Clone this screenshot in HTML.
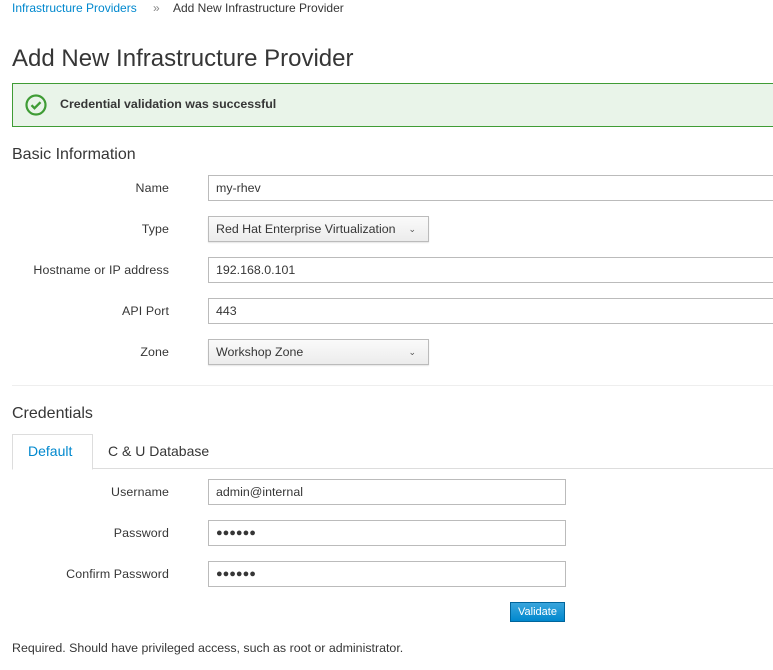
<!DOCTYPE html>
<html><head><style>
body{margin:0;width:773px;height:670px;overflow:hidden;background:#fff;font-family:"Liberation Sans",sans-serif;color:#363636;position:relative;font-size:12px}
.a{position:absolute;white-space:nowrap}
.lbl{position:absolute;right:604px;font-size:12.4px;color:#363636;line-height:26px;letter-spacing:0.1px}
.in{position:absolute;left:208px;height:24px;border:1px solid #bbb;background:#fff;box-sizing:content-box;font-size:12.4px;line-height:24px;padding-left:7px}
.sel{position:absolute;left:208px;height:26px;border:1px solid #bbb;background:linear-gradient(#fafafa,#ececec);font-size:12.4px;line-height:24px;padding-left:7px;box-sizing:border-box;box-shadow:0 1px 1px rgba(0,0,0,.1)}
.sel span{position:absolute;right:12px;top:0;font-size:9px;color:#555}
</style></head><body>
<div class="a" style="left:12px;top:1px;color:#0088ce">Infrastructure Providers</div>
<div class="a" style="left:153px;top:1px;color:#888">»</div>
<div class="a" style="left:173px;top:1px;color:#363636">Add New Infrastructure Provider</div>
<div class="a" style="left:12px;top:45px;font-size:24px;color:#363636">Add New Infrastructure Provider</div>
<div class="a" style="left:12px;top:83px;width:770px;height:42px;border:1px solid #3f9c35;background:#e9f4e9"></div>
<svg class="a" style="left:25px;top:94px" width="22" height="22" viewBox="0 0 22 22"><circle cx="11" cy="11" r="9.5" fill="none" stroke="#3f9c35" stroke-width="2.2"/><path d="M6.5 11.2l3 3 6-6" fill="none" stroke="#3f9c35" stroke-width="2.4"/></svg>
<div class="a" style="left:60px;top:97px;font-weight:bold;font-size:12.4px;color:#363636">Credential validation was successful</div>
<div class="a" style="left:12px;top:146px;font-size:16px">Basic Information</div>
<div class="lbl" style="top:175px">Name</div><div class="in" style="top:175px;width:560px">my-rhev</div>
<div class="lbl" style="top:216px">Type</div><div class="sel" style="top:216px;width:221px">Red Hat Enterprise Virtualization<span>⌄</span></div>
<div class="lbl" style="top:257px">Hostname or IP address</div><div class="in" style="top:257px;width:560px">192.168.0.101</div>
<div class="lbl" style="top:298px">API Port</div><div class="in" style="top:298px;width:560px">443</div>
<div class="lbl" style="top:339px">Zone</div><div class="sel" style="top:339px;width:221px">Workshop Zone<span>⌄</span></div>
<div class="a" style="left:12px;top:385px;width:761px;height:1px;background:#eee"></div>
<div class="a" style="left:12px;top:405px;font-size:16px">Credentials</div>
<div class="a" style="left:12px;top:468px;width:761px;height:1px;background:#ddd"></div>
<div class="a" style="left:12px;top:434px;width:79px;height:34px;border:1px solid #ddd;border-bottom:1px solid #fff;background:#fff"></div>
<div class="a" style="left:28px;top:443px;font-size:14px;color:#0088ce">Default</div>
<div class="a" style="left:108px;top:443px;font-size:14px;color:#363636">C &amp; U Database</div>
<div class="lbl" style="top:479px">Username</div><div class="in" style="top:479px;width:349px">admin@internal</div>
<div class="lbl" style="top:520px">Password</div><div class="in" style="top:520px;width:349px;font-size:11px">●●●●●●</div>
<div class="lbl" style="top:561px">Confirm Password</div><div class="in" style="top:561px;width:349px;font-size:11px">●●●●●●</div>
<div class="a" style="left:510px;top:602px;width:53px;height:18px;border:1px solid #00659c;background:linear-gradient(#39a5dc,#0088ce);color:#fff;font-size:11px;line-height:18px;text-align:center">Validate</div>
<div class="a" style="left:12px;top:641px;font-size:12.4px">Required. Should have privileged access, such as root or administrator.</div>
</body></html>
